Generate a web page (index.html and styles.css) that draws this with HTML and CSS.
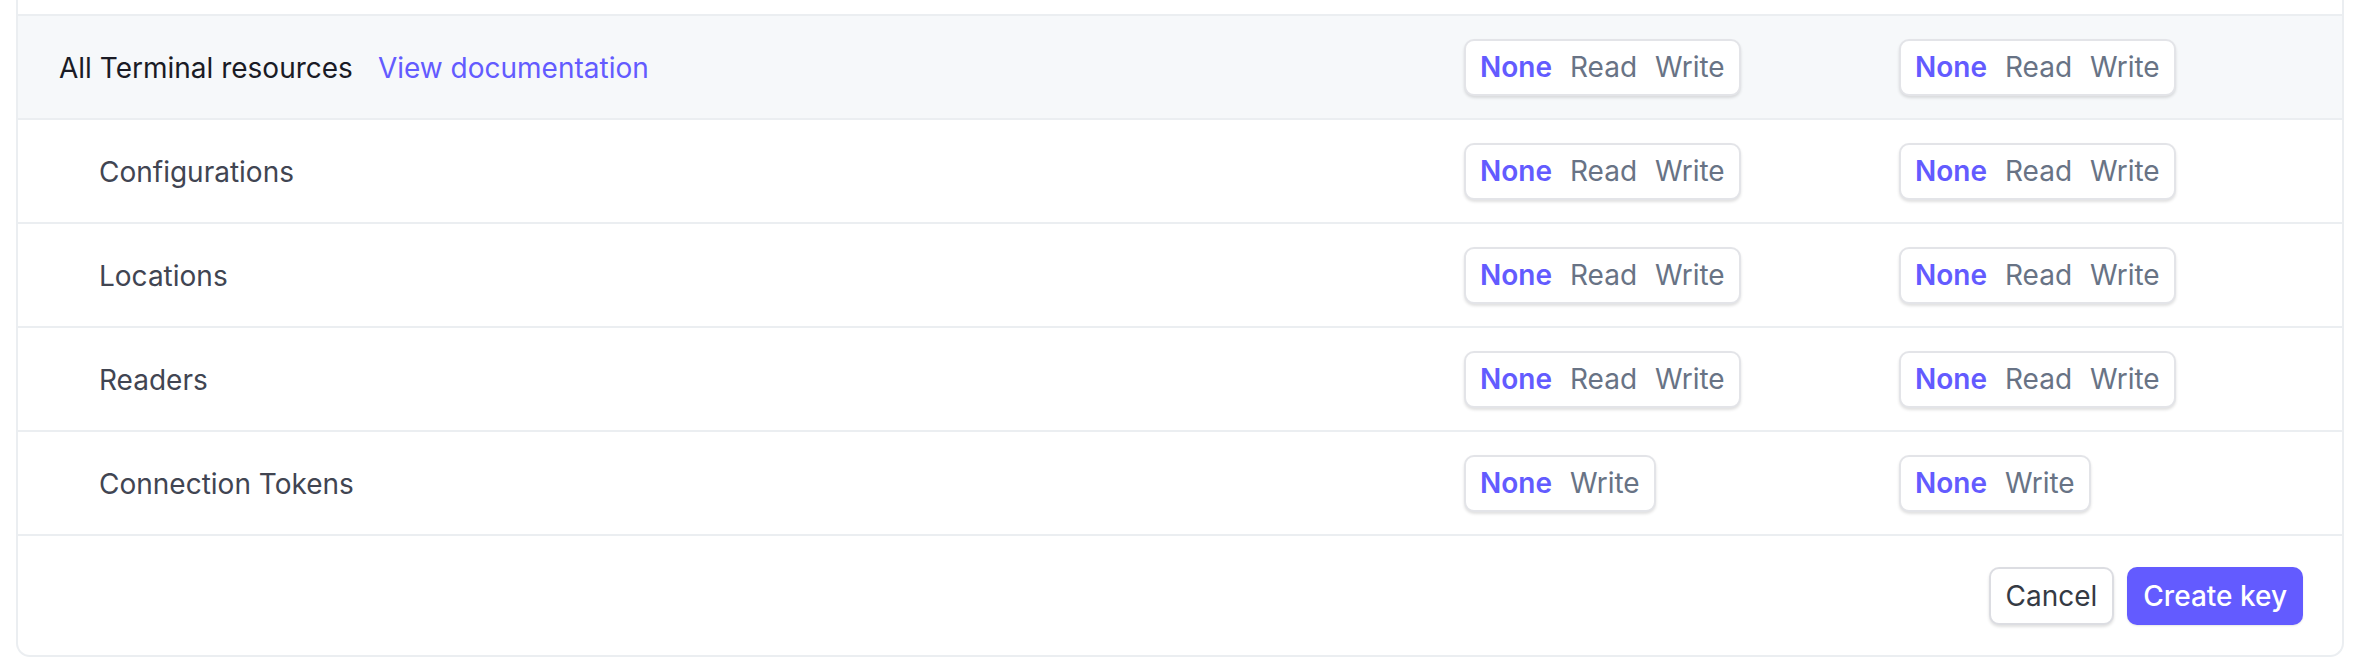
FILE: index.html
```html
<!DOCTYPE html>
<html lang="en">
<head>
<meta charset="utf-8">
<link rel="stylesheet" href="styles.css">
<title>Terminal permissions</title>
</head>
<body>
<div class="card">
  <div class="prev-row"></div>
  <div class="row row-head">
    <div class="label"><span class="title">All Terminal resources</span><a class="doc-link" href="#">View documentation</a></div>
    <div class="cell"><div class="seg"><span class="opt on">None</span><span class="opt">Read</span><span class="opt">Write</span></div></div>
    <div class="cell"><div class="seg"><span class="opt on">None</span><span class="opt">Read</span><span class="opt">Write</span></div></div>
  </div>
  <div class="row">
    <div class="label sub">Configurations</div>
    <div class="cell"><div class="seg"><span class="opt on">None</span><span class="opt">Read</span><span class="opt">Write</span></div></div>
    <div class="cell"><div class="seg"><span class="opt on">None</span><span class="opt">Read</span><span class="opt">Write</span></div></div>
  </div>
  <div class="row">
    <div class="label sub">Locations</div>
    <div class="cell"><div class="seg"><span class="opt on">None</span><span class="opt">Read</span><span class="opt">Write</span></div></div>
    <div class="cell"><div class="seg"><span class="opt on">None</span><span class="opt">Read</span><span class="opt">Write</span></div></div>
  </div>
  <div class="row">
    <div class="label sub">Readers</div>
    <div class="cell"><div class="seg"><span class="opt on">None</span><span class="opt">Read</span><span class="opt">Write</span></div></div>
    <div class="cell"><div class="seg"><span class="opt on">None</span><span class="opt">Read</span><span class="opt">Write</span></div></div>
  </div>
  <div class="row">
    <div class="label sub">Connection Tokens</div>
    <div class="cell"><div class="seg"><span class="opt on">None</span><span class="opt">Write</span></div></div>
    <div class="cell"><div class="seg"><span class="opt on">None</span><span class="opt">Write</span></div></div>
  </div>
  <div class="footer">
    <button class="btn btn-secondary" type="button">Cancel</button>
    <button class="btn btn-primary" type="button">Create key</button>
  </div>
</div>
</body>
</html>
```
FILE: styles.css
```css
* { box-sizing: border-box; }
html, body { margin: 0; padding: 0; background: #ffffff; }
body {
  font-family: Inter, "Noto Sans", "Liberation Sans", sans-serif;
  font-size: 28px;
  color: #414552;
  -webkit-font-smoothing: antialiased;
}
.card {
  margin: 0 16px;
  border: 2px solid #ebeef1;
  border-top: none;
  border-radius: 0 0 14px 14px;
  background: #ffffff;
  overflow: hidden;
}
.prev-row { height: 14px; background: #ffffff; }
.row {
  display: grid;
  grid-template-columns: 1fr 435px 435px;
  align-items: center;
  height: 104px;
  padding: 2px 8px 0 41px;
  border-top: 2px solid #ebeef1;
}
.row-head { background: #f6f8fa; }
.label { display: flex; align-items: center; gap: 25px; white-space: nowrap; }
.title { color: #1a1b25; }
.doc-link { color: #635bff; text-decoration: none; }
.sub { padding-left: 40px; color: #414552; }
.cell { display: flex; align-items: center; margin-top: -2px; }
.seg {
  display: inline-flex;
  align-items: center;
  height: 57px;
  padding: 0 5px;
  background: #ffffff;
  border: 2px solid #e3e4e8;
  border-radius: 10px;
  box-shadow: 0 2px 3px rgba(0, 0, 0, 0.12);
}
.opt { padding: 0 9px; color: #687385; line-height: 1; }
.opt.on { color: #635bff; font-weight: 600; }
.footer {
  display: flex;
  justify-content: flex-end;
  align-items: center;
  gap: 13px;
  height: 121px;
  padding: 0 39px 0 0;
  border-top: 2px solid #ebeef1;
}
.btn {
  font-family: inherit;
  font-size: 28px;
  height: 58px;
  border-radius: 10px;
  padding: 0 15px;
  cursor: pointer;
}
.btn-secondary {
  background: #ffffff;
  color: #353a44;
  border: 2px solid #dcdde2;
  box-shadow: 0 2px 3px rgba(0, 0, 0, 0.12);
}
.btn-primary {
  background: #635bff;
  color: #ffffff;
  border: none;
  font-weight: 500;
  padding: 0 16px;
  box-shadow: 0 1px 2px rgba(0, 0, 0, 0.1);
}
```
